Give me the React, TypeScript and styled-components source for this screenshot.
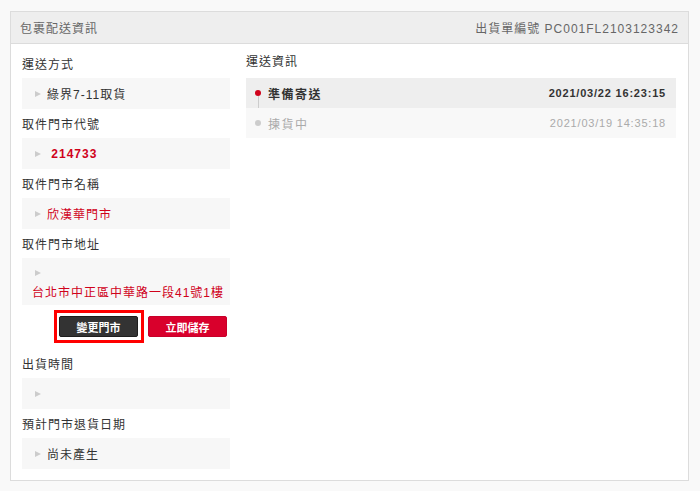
import * as React from 'react';
import styled, { createGlobalStyle } from 'styled-components';

const GlobalStyle = createGlobalStyle`
  html, body {
    margin: 0;
    background: #f9f9f9;
  }
  body {
    padding: 11px 0 0 10px;
    font-family: "Liberation Sans", Arial, "Noto Sans CJK TC", sans-serif;
    font-size: 12px;
    color: #333;
    letter-spacing: 1px;
  }
`;

const fields = [
  { label: '取件門市代號', value: ' 214733', tone: 'code' },
  { label: '取件門市名稱', value: '欣漢華門市', tone: 'red' },
] as const;

const timeline = [
  { status: '準備寄送', time: '2021/03/22 16:23:15', active: true },
  { status: '揀貨中', time: '2021/03/19 14:35:18', active: false },
];

export default function App() {
  return (
    <>
      <GlobalStyle />
      <Panel>
        <Header>
          <HeaderTitle>包裹配送資訊</HeaderTitle>
          <HeaderTitle>出貨單編號 PC001FL2103123342</HeaderTitle>
        </Header>
        <Body>
          <LeftCol>
            <Label>運送方式</Label>
            <Box>
              <Arrow />
              <Value>綠界7-11取貨</Value>
            </Box>
            {fields.map((f) => (
              <React.Fragment key={f.label}>
                <Label>{f.label}</Label>
                <Box>
                  <Arrow />
                  <Value $tone={f.tone}>{f.value}</Value>
                </Box>
              </React.Fragment>
            ))}
            <Label>取件門市地址</Label>
            <AddressBox>
              <AddressLine>
                <Arrow />
              </AddressLine>
              <AddressLine>
                <Value $tone="red">台北市中正區中華路一段41號1樓</Value>
              </AddressLine>
            </AddressBox>
            <Buttons>
              <Button $dark $marked>變更門市</Button>
              <Button>立即儲存</Button>
            </Buttons>
            <Label>出貨時間</Label>
            <Box>
              <Arrow />
            </Box>
            <Label>預計門市退貨日期</Label>
            <Box>
              <Arrow />
              <Value>尚未產生</Value>
            </Box>
          </LeftCol>
          <RightCol>
            <RightLabel>運送資訊</RightLabel>
            {timeline.map((t, i) => (
              <Step key={t.status} $active={t.active} $first={i === 0}>
                <Dot $active={t.active} />
                <StepName>{t.status}</StepName>
                <StepTime>{t.time}</StepTime>
              </Step>
            ))}
          </RightCol>
        </Body>
      </Panel>
    </>
  );
}

const Panel = styled.div`
  width: 679px;
  box-sizing: border-box;
  border: 1px solid #dcdcdc;
  background: #fff;
`;

const Header = styled.div`
  height: 31px;
  background: #eeeeee;
  border-bottom: 1px solid #dcdcdc;
  display: flex;
  align-items: center;
  justify-content: space-between;
  padding: 0 9px 0 9px;
`;

const HeaderTitle = styled.div`
  color: #666;
  font-size: 12px;
  letter-spacing: 1px;
`;

const Body = styled.div`
  display: flex;
  gap: 16px;
  padding: 5px 12px 11px 11px;
`;

const LeftCol = styled.div`
  width: 208px;
  display: flex;
  flex-direction: column;
`;

const RightCol = styled.div`
  flex: 1;
  display: flex;
  flex-direction: column;
`;

const Label = styled.div`
  padding-top: 8px;
  line-height: 16px;
  margin-bottom: 5px;
  color: #333;
`;

const RightLabel = styled(Label)`
  padding-top: 5px;
  margin-bottom: 8px;
`;

const Box = styled.div`
  min-height: 31px;
  background: #f7f7f7;
  display: flex;
  align-items: center;
  padding: 0 10px;
`;

const AddressBox = styled.div`
  background: #f7f7f7;
  padding: 5px 10px 4px;
`;

const AddressLine = styled.div`
  height: 19px;
  display: flex;
  align-items: center;
`;

const Arrow = styled.span`
  display: inline-block;
  width: 0;
  height: 0;
  border-left: 6px solid #cccccc;
  border-top: 3.5px solid transparent;
  border-bottom: 3.5px solid transparent;
  margin: 0 6px 0 3px;
  flex-shrink: 0;
`;

const Value = styled.span<{ $tone?: 'red' | 'code' }>`
  white-space: pre;
  color: ${(p) => (p.$tone ? '#d0021b' : '#333')};
  font-weight: ${(p) => (p.$tone === 'code' ? 700 : 400)};
`;

const Buttons = styled.div`
  display: flex;
  justify-content: flex-end;
  gap: 10px;
  padding-right: 3px;
  margin: 11px 0 12px;
`;

const Button = styled.button<{ $dark?: boolean; $marked?: boolean }>`
  position: relative;
  width: 79px;
  height: 21px;
  border-radius: 2px;
  border: 1px solid ${(p) => (p.$dark ? '#1e1e1e' : '#c8002a')};
  background: ${(p) => (p.$dark ? '#333333' : '#d9002c')};
  color: #fff;
  font-family: inherit;
  font-size: 11px;
  font-weight: 700;
  letter-spacing: 0;
  padding: 0;

  ${(p) =>
    p.$marked &&
    `
    &::after {
      content: '';
      position: absolute;
      top: -7px;
      left: -6px;
      right: -7px;
      bottom: -7px;
      border: 3px solid #ff0000;
    }
  `}
`;

const Step = styled.div<{ $active: boolean; $first: boolean }>`
  position: relative;
  height: 30px;
  display: flex;
  align-items: center;
  padding: 0 10px 0 9px;
  background: ${(p) => (p.$active ? '#eeeeee' : '#f8f8f8')};
  color: ${(p) => (p.$active ? '#333' : '#aaa')};
  font-weight: ${(p) => (p.$active ? 700 : 400)};

  ${(p) =>
    p.$first &&
    `
    &::after {
      content: '';
      position: absolute;
      left: 12px;
      top: 18px;
      height: 25px;
      width: 1px;
      background: #cccccc;
    }
  `}
`;

const Dot = styled.span<{ $active: boolean }>`
  width: 6px;
  height: 6px;
  border-radius: 50%;
  background: ${(p) => (p.$active ? '#d0021b' : '#cccccc')};
  margin-right: 7px;
`;

const StepName = styled.span`
  font-size: 12px;
  letter-spacing: 1.5px;
`;

const StepTime = styled.span`
  margin-left: auto;
  font-size: 11px;
  letter-spacing: 0.8px;
`;
